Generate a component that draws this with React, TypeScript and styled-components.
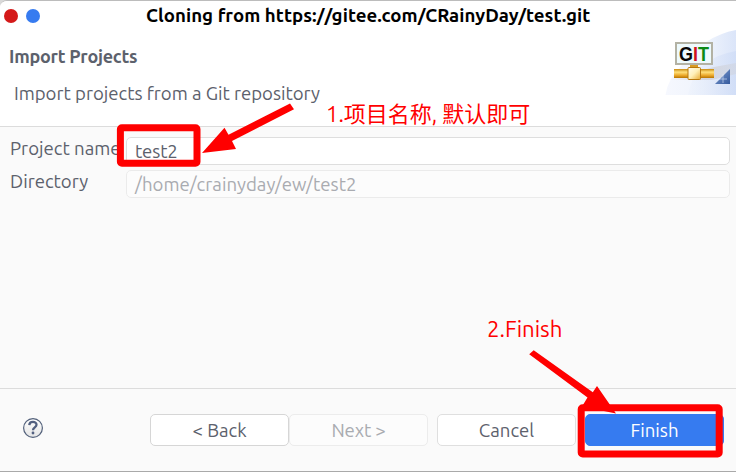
import React from 'react';
import styled, { createGlobalStyle } from 'styled-components';

const Global = createGlobalStyle`
  *{box-sizing:border-box}
  html,body{margin:0;background:#d9d9d9}
`;

const Dialog = styled.main`
  position:relative;width:736px;height:472px;overflow:hidden;
  display:flex;flex-direction:column;
  background:#fafafa;color:#5c616c;
  border-top:1px solid #bcbcbc;border-bottom:1px solid #a9a9a9;
  border-top-left-radius:7px;
  font:18.6px/24px Ubuntu,"Noto Sans","Noto Sans CJK SC",sans-serif;
`;
const TitleBar = styled.header`
  flex:0 0 29px;display:grid;grid-template-columns:146px 1fr;align-items:center;background:#fff;
`;
const Controls = styled.div`display:flex;gap:8px;padding-left:4px;`;
const Dot = styled.button<{ $color: string }>`
  width:14px;height:14px;padding:0;border:0;border-radius:50%;background:${p => p.$color};
`;
const Label = styled.span<{ $spacing?: number; $size?: number }>`
  display:inline-block;white-space:nowrap;
  font-size:${p => p.$size ?? 18.6}px;letter-spacing:${p => p.$spacing ?? 0}px;
`;
const Title = styled(Label)`color:#000;font-weight:600;`;
const Banner = styled.section`
  flex:0 0 97px;display:flex;justify-content:space-between;background:#fff;border-bottom:1px solid #dcdcdc;
`;
const BannerText = styled.div`display:flex;flex-direction:column;gap:14px;padding:14px 0 0 9px;`;
const Heading = styled(Label)`font-weight:600;`;
const Description = styled(Label)`margin-left:5px;`;
const BannerArt = styled.svg`display:block;width:72px;height:67px;`;
const Form = styled.section`
  flex:1;display:grid;grid-template-columns:116px 604px;grid-template-rows:28px 28px;
  row-gap:5px;padding:10px 0 0 10px;
`;
const FieldName = styled.label`white-space:nowrap;`;
const Field = styled.div<{ $disabled?: boolean }>`
  height:28px;padding:2px 8px;border-radius:5px;
  border:1px solid ${p => (p.$disabled ? '#ebebeb' : '#dedede')};
  background:${p => (p.$disabled ? '#fcfcfc' : '#fff')};
  color:${p => (p.$disabled ? '#a9abb0' : '#5c616c')};
`;
const Footer = styled.footer`
  flex:0 0 83px;display:flex;align-items:flex-start;padding:25px 0 0 22px;border-top:1px solid #dcdcdc;
`;
const Help = styled.svg`width:22px;height:22px;margin-top:3px;margin-right:106px;flex:none;`;
const Button = styled.button<{ $kind?: 'disabled' | 'primary' | 'strong'; $gap?: number }>`
  width:139px;height:32px;padding:2px 0 0;margin-left:${p => p.$gap ?? 0}px;flex:none;
  border-radius:5px;font:inherit;
  border:1px solid ${p => (p.$kind === 'primary' ? '#367bf0' : p.$kind === 'disabled' ? '#ececec' : p.$kind === 'strong' ? '#d6d6d6' : '#dfdfdf')};
  background:${p => (p.$kind === 'primary' ? '#367bf0' : p.$kind === 'disabled' ? '#fcfcfc' : '#fff')};
  color:${p => (p.$kind === 'primary' ? '#fff' : p.$kind === 'disabled' ? '#a9abb0' : '#5c616c')};
`;
const Markup = styled.svg`position:absolute;left:0;top:-1px;width:736px;height:472px;pointer-events:none;`;
const Note = styled.div<{ $x: number; $y: number }>`
  position:absolute;left:${p => p.$x}px;top:${p => p.$y}px;color:#f00;line-height:28px;
`;

function GitBanner() {
  return (
    <BannerArt viewBox="664 30 72 67">
      <defs>
        <linearGradient id="sky" x1="0" y1="0" x2="1" y2="0">
          <stop offset="0" stopColor="#f6f8fe" /><stop offset=".6" stopColor="#eef3fc" /><stop offset="1" stopColor="#dbe5f9" />
        </linearGradient>
        <linearGradient id="sky2" x1="0" y1="0" x2="1" y2="0">
          <stop offset="0" stopColor="#eef3fc" /><stop offset="1" stopColor="#ccdaf6" />
        </linearGradient>
        <linearGradient id="pipe" x1="0" y1="0" x2="0" y2="1">
          <stop offset="0" stopColor="#c98a10" /><stop offset=".35" stopColor="#ffe07a" />
          <stop offset=".7" stopColor="#eca92a" /><stop offset="1" stopColor="#b87400" />
        </linearGradient>
        <linearGradient id="hub" x1="0" y1="0" x2="1" y2="1">
          <stop offset="0" stopColor="#fffdf0" /><stop offset=".5" stopColor="#fff0b8" /><stop offset="1" stopColor="#e8aa30" />
        </linearGradient>
        <linearGradient id="beam" x1="0" y1="0" x2="1" y2="0">
          <stop offset="0" stopColor="#d0d0d5" stopOpacity="0" /><stop offset=".55" stopColor="#d0d0d5" stopOpacity=".8" /><stop offset="1" stopColor="#d0d3dc" stopOpacity=".5" />
        </linearGradient>
        <linearGradient id="corner" x1="0" y1="0" x2="1" y2="1">
          <stop offset="0" stopColor="#a8c0e4" /><stop offset=".5" stopColor="#5b7db8" /><stop offset="1" stopColor="#34599d" />
        </linearGradient>
      </defs>
      <path d="M665.5 95Q668 78 682 65Q704 36 736 30V95Z" fill="url(#sky)" />
      <path d="M688 95Q694 58 736 51V95Z" fill="url(#sky2)" opacity=".65" />
      <path d="M668 80L714 67L736 63V74L712 80Z" fill="url(#beam)" />
      <rect x="676" y="43" width="36" height="21" fill="#eefafd" stroke="#b3b2a4" strokeWidth="2" />
      <text x="679" y="60.5" textLength="30" lengthAdjust="spacingAndGlyphs" fontFamily="Liberation Sans, sans-serif" fontWeight="700" fontSize="19.5">
        <tspan fill="#080808">G</tspan><tspan fill="#cf1020">I</tspan><tspan fill="#0d8a16">T</tspan>
      </text>
      <rect x="690" y="65" width="8" height="4" fill="#d99b23" />
      <rect x="674" y="69" width="40" height="9" fill="url(#pipe)" />
      <rect x="688" y="67.5" width="12.5" height="12" rx="1" fill="url(#hub)" stroke="#b7780e" />
      <path d="M730 69V84H715Z" fill="url(#corner)" />
      <path d="M723 74V83M719 79H727" stroke="#e8f0ff" strokeWidth=".8" opacity=".7" />
    </BannerArt>
  );
}

export default function App() {
  return (
    <>
      <Global />
      <Dialog>
        <TitleBar>
          <Controls><Dot $color="#d41919" aria-label="Close" /><Dot $color="#367bf0" aria-label="Maximize" /></Controls>
          <Title $size={18.67} $spacing={0.05}>Cloning from https://gitee.com/CRainyDay/test.git</Title>
        </TitleBar>
        <Banner>
          <BannerText>
            <Heading $size={18} $spacing={-0.25}>Import Projects</Heading>
            <Description $spacing={-0.02}>Import projects from a Git repository</Description>
          </BannerText>
          <GitBanner />
        </Banner>
        <Form>
          <FieldName><Label>Project name</Label></FieldName>
          <Field><Label $spacing={-0.15}>test2</Label></Field>
          <FieldName><Label>Directory</Label></FieldName>
          <Field $disabled><Label $spacing={0.03}>/home/crainyday/ew/test2</Label></Field>
        </Form>
        <Footer>
          <Help viewBox="0 0 22 22" role="img" aria-label="Help">
            <defs><linearGradient id="help" x2="0" y2="1"><stop stopColor="#fff" /><stop offset="1" stopColor="#e4e4e4" /></linearGradient></defs>
            <circle cx="11" cy="11" r="9.4" fill="url(#help)" stroke="#53617b" strokeWidth="1.2" />
            <path d="M7.3 8.1C7.5 3.8 14.5 4 14.5 7.8C14.5 10.4 11 10.3 11 13.2" fill="none" stroke="#526080" strokeWidth="2.3" />
            <circle cx="11" cy="16" r="1.4" fill="#526080" />
          </Help>
          <Button $kind="strong"><Label>&lt; Back</Label></Button>
          <Button $kind="disabled"><Label $spacing={-0.15}>Next &gt;</Label></Button>
          <Button $gap={9}><Label>Cancel</Label></Button>
          <Button $kind="primary" $gap={9}><Label>Finish</Label></Button>
        </Footer>
        <Markup viewBox="0 0 736 472">
          <g fill="none" stroke="#f00" strokeWidth="7">
            <rect x="120.4" y="127.8" width="76.6" height="35.4" rx="1.5" />
            <rect x="581.2" y="407.8" width="138" height="46.2" rx="1.5" />
          </g>
          <path fill="#f00" d="M290 103.5L294 109.3L232 141L236 149L202 153L224.5 127.7L228.5 134.7Z" />
          <path fill="#f00" d="M529.2 354.3L533.7 350.3L592.8 392.3L597 386L616 413.5L582 406.5L587.5 397.5Z" />
        </Markup>
        <Note $x={326} $y={99}><Label $size={22}>1.项目名称, 默认即可</Label></Note>
        <Note $x={487} $y={314}><Label $size={22.2}>2.Finish</Label></Note>
      </Dialog>
    </>
  );
}
